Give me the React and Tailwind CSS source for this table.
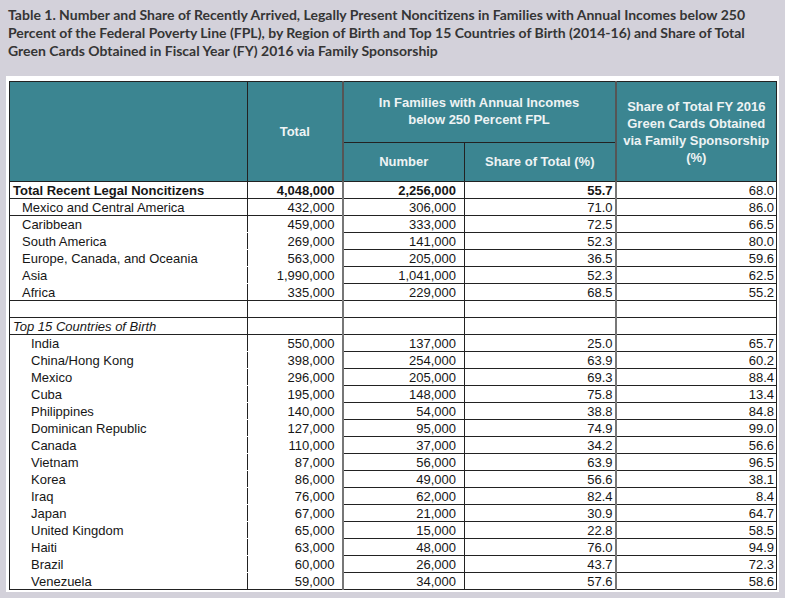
import React from 'react';

const regions = [
  ['Mexico and Central America', '432,000', '306,000', '71.0', '86.0'],
  ['Caribbean', '459,000', '333,000', '72.5', '66.5'],
  ['South America', '269,000', '141,000', '52.3', '80.0'],
  ['Europe, Canada, and Oceania', '563,000', '205,000', '36.5', '59.6'],
  ['Asia', '1,990,000', '1,041,000', '52.3', '62.5'],
  ['Africa', '335,000', '229,000', '68.5', '55.2'],
];

const countries = [
  ['India', '550,000', '137,000', '25.0', '65.7'],
  ['China/Hong Kong', '398,000', '254,000', '63.9', '60.2'],
  ['Mexico', '296,000', '205,000', '69.3', '88.4'],
  ['Cuba', '195,000', '148,000', '75.8', '13.4'],
  ['Philippines', '140,000', '54,000', '38.8', '84.8'],
  ['Dominican Republic', '127,000', '95,000', '74.9', '99.0'],
  ['Canada', '110,000', '37,000', '34.2', '56.6'],
  ['Vietnam', '87,000', '56,000', '63.9', '96.5'],
  ['Korea', '86,000', '49,000', '56.6', '38.1'],
  ['Iraq', '76,000', '62,000', '82.4', '8.4'],
  ['Japan', '67,000', '21,000', '30.9', '64.7'],
  ['United Kingdom', '65,000', '15,000', '22.8', '58.5'],
  ['Haiti', '63,000', '48,000', '76.0', '94.9'],
  ['Brazil', '60,000', '26,000', '43.7', '72.3'],
  ['Venezuela', '59,000', '34,000', '57.6', '58.6'],
];

// label + total columns only get a bottom rule on some rows
const Row = ({ label, total, number, share, green, indent = 'pl-[3px]', bold, italic, ruled }) => {
  const rule = ruled ? 'border-b border-b-[#222]' : 'border-b border-b-transparent';
  return (
    <tr className="h-[17px]">
      <td className={`${indent} ${rule} pt-[2px] border-l border-l-[#222] whitespace-nowrap ${bold ? 'font-bold' : ''} ${italic ? 'italic' : ''}`}>
        {label}
      </td>
      <td className={`${rule} pt-[2px] border-l border-l-[#222] text-right pr-[7px] ${bold ? 'font-bold' : ''}`}>{total}</td>
      <td className={`border-b border-b-[#222] pt-[2px] border-l-2 border-l-[#777] text-right pr-[8px] ${bold ? 'font-bold' : ''}`}>
        {number}
      </td>
      <td className={`border-b border-b-[#222] pt-[2px] border-l border-l-[#222] text-right pr-[2px] ${bold ? 'font-bold' : ''}`}>
        {share}
      </td>
      <td className="border-b border-b-[#222] pt-[2px] border-l-2 border-l-[#777] border-r border-r-[#222] text-right pr-[2px]">
        {green}
      </td>
    </tr>
  );
};

export default function App() {
  return (
    <div className="w-[785px] h-[598px] overflow-hidden bg-[#d3d1da]">
      <p className="px-[8px] pt-[6px] text-[14px] leading-[18px] font-bold text-[#353535] font-['Lato',sans-serif] whitespace-nowrap">
        Table 1. Number and Share of Recently Arrived, Legally Present Noncitizens in Families with Annual Incomes below 250
        <br />
        Percent of the Federal Poverty Line (FPL), by Region of Birth and Top 15 Countries of Birth (2014-16) and Share of Total
        <br />
        Green Cards Obtained in Fiscal Year (FY) 2016 via Family Sponsorship
      </p>

      <div className="mt-[16px] ml-[6px] w-[773px] bg-white pl-[3px] pt-[5px] pb-[2px]">
        <table className="table-fixed border-collapse w-[767px] text-[13px] leading-[14px] text-[#161616] font-['Liberation_Sans',Arial,sans-serif]">
          <colgroup>
            <col className="w-[238px]" />
            <col className="w-[95px]" />
            <col className="w-[122px]" />
            <col className="w-[151px]" />
            <col className="w-[161px]" />
          </colgroup>
          <thead className="bg-[#3b8591] text-[#eef3f4] font-bold">
            <tr className="h-[61px]">
              <th rowSpan={2} className="border border-[#222]" />
              <th rowSpan={2} className="border border-[#222] font-bold">
                Total
              </th>
              <th colSpan={2} className="border border-[#222] border-l-2 border-l-[#555] font-bold leading-[17px] pb-[2px]">
                In Families with Annual Incomes
                <br />
                below 250 Percent FPL
              </th>
              <th rowSpan={2} className="border border-[#222] border-l-2 border-l-[#555] font-bold leading-[17px]">
                Share of Total FY 2016
                <br />
                Green Cards Obtained
                <br />
                via Family Sponsorship
                <br />
                (%)
              </th>
            </tr>
            <tr className="h-[39px]">
              <th className="border border-[#222] border-l-2 border-l-[#555] font-bold">Number</th>
              <th className="border border-[#222] font-bold">Share of Total (%)</th>
            </tr>
          </thead>
          <tbody>
            <Row label="Total Recent Legal Noncitizens" total="4,048,000" number="2,256,000" share="55.7" green="68.0" bold ruled />
            {regions.map(([label, total, number, share, green], i) => (
              <Row
                key={label}
                label={label}
                total={total}
                number={number}
                share={share}
                green={green}
                indent="pl-[12px]"
                ruled={i === 0 || i === regions.length - 1}
              />
            ))}
            <Row label="" total="" number="" share="" green="" ruled />
            <Row label="Top 15 Countries of Birth" total="" number="" share="" green="" italic ruled />
            {countries.map(([label, total, number, share, green], i) => (
              <Row
                key={label}
                label={label}
                total={total}
                number={number}
                share={share}
                green={green}
                indent="pl-[21px]"
                ruled={i === countries.length - 1}
              />
            ))}
          </tbody>
        </table>
      </div>
    </div>
  );
}
